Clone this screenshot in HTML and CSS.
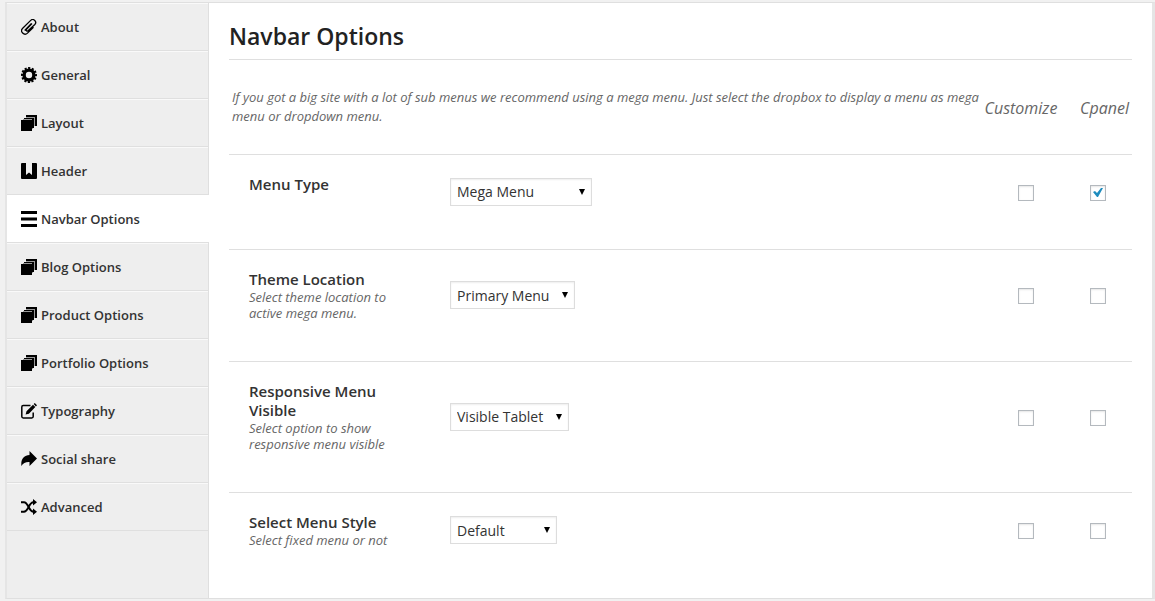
FILE: index.html
```html
<!DOCTYPE html>
<html lang="en">
<head>
  <meta charset="UTF-8" />
  <meta name="viewport" content="width=device-width, initial-scale=1.0"/>
  <title>Navbar Options</title>

  <link rel="stylesheet" href="styles.css">
</head>
<body>
  <svg class="sprite" aria-hidden="true">
    <symbol id="icon-layers" viewBox="0 0 16 16">
      <path d="M5 0h11v11h-2V2H5z"/>
      <path d="M3 3h10v10h-2V4H3z"/>
      <path d="M0 5h11v11H0z"/>
      <path d="M5 2h9v9h-1V3H5zM2 4h9v9h1v1h-1V5H2z" fill="#999"/>
    </symbol>
  </svg>

  <div class="panel">
    <nav class="sidebar">
      <a href="#about">
        <svg viewBox="0 0 16 16" fill="none" stroke="#000" stroke-width="1.3"><path d="M11 4.500L5.500 10.200a1.100 1.100 0 0 0 1.600 1.600L13.800 5.500a2.900 2.900 0 0 0-4.100-4.100L1.700 9.200a3.400 3.400 0 0 0 4.800 4.900L12.500 8.300M3.700 11.500L10.200 4.600"/></svg>
        About
      </a>
      <a href="#general">
        <svg viewBox="0 0 16 16" fill="none" stroke="#000"><circle cx="8" cy="8" r="4.9" stroke-width="3.4"/><circle cx="8" cy="8" r="7" stroke-width="2" stroke-dasharray="2.2 1.465" stroke-dashoffset="1.1"/></svg>
        General
      </a>
      <a href="#layout"><svg><use href="#icon-layers"/></svg>Layout</a>
      <a href="#header">
        <svg viewBox="0 0 16 16"><path d="M1 0h4v12l3-2.5 3 2.5V0h4a1 1 0 0 1 1 1v14a1 1 0 0 1-1 1H1a1 1 0 0 1-1-1V1a1 1 0 0 1 1-1z"/></svg>
        Header
      </a>
      <a href="#navbar" class="active">
        <svg viewBox="0 0 16 16"><path d="M0 0h16v3H0zM0 6.5h16v3H0zM0 13h16v3H0z"/></svg>
        Navbar Options
      </a>
      <a href="#blog"><svg><use href="#icon-layers"/></svg>Blog Options</a>
      <a href="#product"><svg><use href="#icon-layers"/></svg>Product Options</a>
      <a href="#portfolio"><svg><use href="#icon-layers"/></svg>Portfolio Options</a>
      <a href="#typography">
        <svg viewBox="0 0 16 16"><path d="M9.5 2.6H2.2Q.8 2.6.8 4v9.6Q.8 15 2.2 15h8.6q1.4 0 1.4-1.4V9.5" fill="none" stroke="#000" stroke-width="1.5"/><path d="M4.6 11.6l.9-3.3L12 1.8l2.3 2.3L7.9 10.700zM12.700 1.100L13.800 0 16 2.300l-1.100 1.100z"/></svg>
        Typography
      </a>
      <a href="#social">
        <svg viewBox="0 0 16 16"><path d="M8.500 0L16 7.500 8.500 15V11C5 10.800 2 11.800.4 15-.4 8.500 3 4.200 8.500 4.100z"/></svg>
        Social share
      </a>
      <a href="#advanced">
        <svg viewBox="0 0 16 16"><path d="M0 3.200h3c4.500 0 4.500 9.600 9.500 9.600M0 12.800h3c4.500 0 4.500-9.600 9.500-9.600" fill="none" stroke="#000" stroke-width="2"/><path d="M12 0l4 3.200-4 3.300zM12 9.500l4 3.300-4 3.200z"/></svg>
        Advanced
      </a>
    </nav>

    <main class="content">
      <h1>Navbar Options</h1>

      <div class="row intro">
        <p>If you got a big site with a lot of sub menus we recommend using a mega menu. Just select the dropbox to display a menu as mega menu or dropdown menu.</p>
        <span class="col-title">Customize</span>
        <span class="col-title">Cpanel</span>
      </div>

      <div class="row option">
        <div class="label">
          <label for="menu-type">Menu Type</label>
        </div>
        <div class="field">
          <select id="menu-type" class="wide"><option>Mega Menu</option><option>Dropdown Menu</option></select>
        </div>
        <input type="checkbox" aria-label="Customize menu type">
        <input type="checkbox" aria-label="Cpanel menu type" checked>
      </div>

      <div class="row option">
        <div class="label">
          <label for="theme-location">Theme Location</label>
          <p>Select theme location to active mega menu.</p>
        </div>
        <div class="field">
          <select id="theme-location"><option>Primary Menu</option></select>
        </div>
        <input type="checkbox" aria-label="Customize theme location">
        <input type="checkbox" aria-label="Cpanel theme location">
      </div>

      <div class="row option">
        <div class="label">
          <label for="responsive-menu">Responsive Menu Visible</label>
          <p>Select option to show responsive menu visible</p>
        </div>
        <div class="field">
          <select id="responsive-menu"><option>Visible Tablet</option></select>
        </div>
        <input type="checkbox" aria-label="Customize responsive menu">
        <input type="checkbox" aria-label="Cpanel responsive menu">
      </div>

      <div class="row option">
        <div class="label">
          <label for="menu-style">Select Menu Style</label>
          <p>Select fixed menu or not</p>
        </div>
        <div class="field">
          <select id="menu-style" class="narrow"><option>Default</option><option>Fixed Menu</option></select>
        </div>
        <input type="checkbox" aria-label="Customize menu style">
        <input type="checkbox" aria-label="Cpanel menu style">
      </div>
    </main>
  </div>
</body>
</html>
```
FILE: styles.css
```css
/* Reset & Base Styles */
* {
  box-sizing: border-box;
  margin: 0;
  padding: 0;
}

body {
  font-family: 'Open Sans', sans-serif;
  font-size: 13px;
  background: #f1f1f1;
  color: #333;
  padding: 2px 0 2px 5px;
}

.sprite {
  display: none;
}

.panel {
  display: flex;
  background: white;
  border: 1px solid #dfdfdf;
  border-left: 2px solid #e5e5e5;
  border-right: 3px solid #e5e5e5;
}

/* Sidebar */
.sidebar {
  width: 202px;
  flex-shrink: 0;
  background-color: #eee;
  border-right: 1px solid #dfdfdf;
}

.sidebar a {
  display: flex;
  align-items: center;
  gap: 4px;
  height: 48px;
  padding-left: 14px;
  border-top: 1px solid #f9f9f9;
  border-bottom: 1px solid #dfdfdf;
  color: #333;
  font-weight: 600;
  text-decoration: none;
}

.sidebar a.active {
  background-color: white;
  border-top-color: white;
  margin-right: -1px;
}

.sidebar svg {
  width: 16px;
  height: 16px;
  flex-shrink: 0;
}

/* Content */
.content {
  flex: 1;
  padding: 0 20px 10px;
}

h1 {
  height: 57px;
  padding-top: 17px;
  border-bottom: 1px solid #dfdfdf;
  color: #222;
  font-size: 23px;
  font-weight: 600;
  line-height: 33px;
}

.row {
  display: grid;
  align-items: center;
  justify-items: center;
  border-bottom: 1px solid #dfdfdf;
}

.row:last-child {
  border-bottom: none;
}

.intro {
  grid-template-columns: 1fr 74px 74px;
  height: 95px;
  padding-left: 3px;
  color: #666;
  font-style: italic;
}

.intro p {
  line-height: 19px;
}

.col-title {
  padding-top: 2px;
  font-size: 16px;
}

.col-title:last-child {
  justify-self: end;
  padding-right: 3px;
}

.option {
  grid-template-columns: 150px 1fr 76px 68px;
  padding: 20px 0 39px 20px;
}

.label {
  justify-self: start;
  min-height: 35px;
}

.label label {
  display: block;
  font-size: 15px;
  font-weight: 600;
  line-height: 19px;
}

.label p {
  padding-bottom: 1px;
  color: #666;
  font-style: italic;
  line-height: 16px;
}

.field {
  justify-self: start;
  padding: 0 0 2px 51px;
}

select {
  appearance: none;
  display: block;
  height: 28px;
  padding: 0 24px 0 6px;
  border: 1px solid #ddd;
  background: white url("data:image/svg+xml,%3Csvg xmlns='http://www.w3.org/2000/svg' width='6' height='6'%3E%3Cpath d='M0 0h6L3 6z'/%3E%3C/svg%3E") no-repeat right 6px top 10px;
  box-shadow: inset 0 1px 2px rgba(0, 0, 0, 0.07);
  color: #333;
  font-family: inherit;
  font-size: 14px;
}

select.wide {
  width: 142px;
}

select.narrow {
  width: 107px;
}

input[type="checkbox"] {
  appearance: none;
  width: 16px;
  height: 16px;
  border: 1px solid #b4b9be;
  background: white;
  box-shadow: inset 0 1px 2px rgba(0, 0, 0, 0.1);
}

input[type="checkbox"]:checked {
  background: white url("data:image/svg+xml,%3Csvg xmlns='http://www.w3.org/2000/svg' width='10' height='9'%3E%3Cpath d='M0 4l2-1 2 2L8 0h2L5 9H4z' fill='%231e8cbe'/%3E%3C/svg%3E") no-repeat center;
}
```
